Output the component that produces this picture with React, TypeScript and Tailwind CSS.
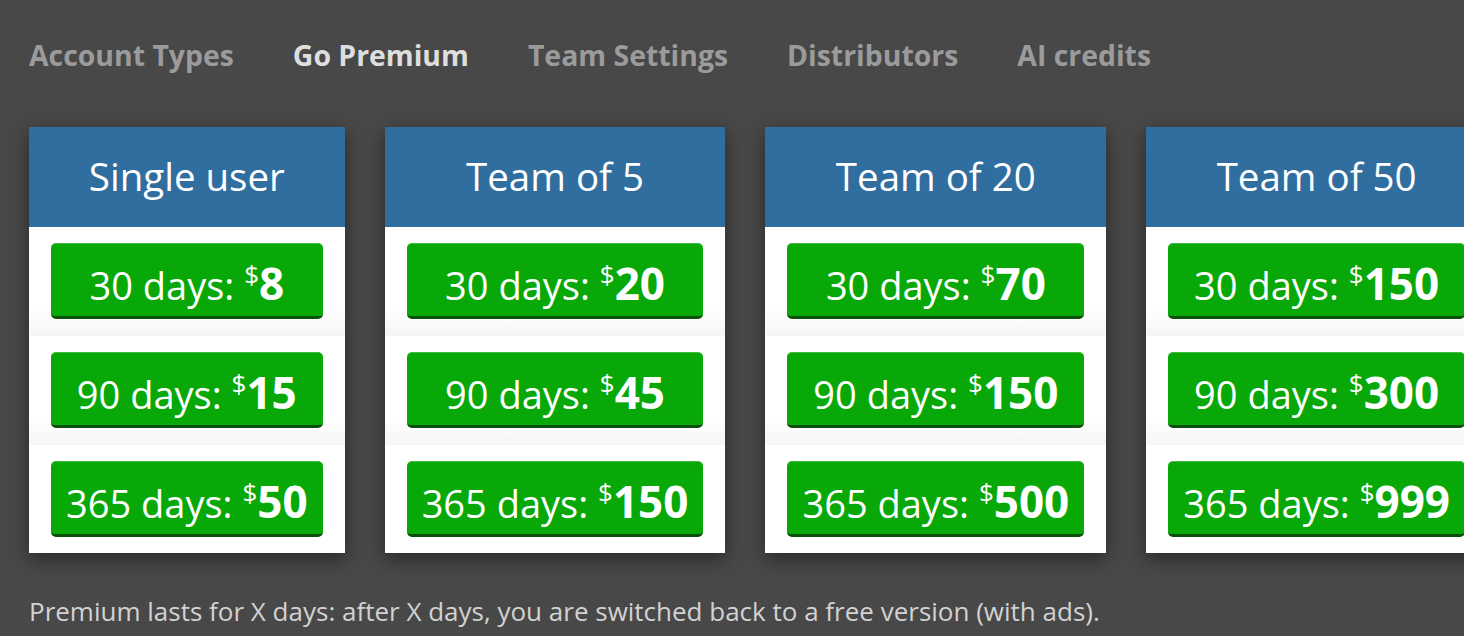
import React from "react";

type Price = { days: string; price: string };
type Plan = { title: string; prices: Price[] };

const plans: Plan[] = [
  { title: "Single user", prices: [{ days: "30", price: "8" }, { days: "90", price: "15" }, { days: "365", price: "50" }] },
  { title: "Team of 5", prices: [{ days: "30", price: "20" }, { days: "90", price: "45" }, { days: "365", price: "150" }] },
  { title: "Team of 20", prices: [{ days: "30", price: "70" }, { days: "90", price: "150" }, { days: "365", price: "500" }] },
  { title: "Team of 50", prices: [{ days: "30", price: "150" }, { days: "90", price: "300" }, { days: "365", price: "999" }] },
];

const tabs = [
  { label: "Account Types", active: false },
  { label: "Go Premium", active: true },
  { label: "Team Settings", active: false },
  { label: "Distributors", active: false },
  { label: "AI credits", active: false },
];

function Card({ plan }: { plan: Plan }) {
  return (
    <div className="shrink-0 w-max bg-white shadow-[0_6px_18px_rgba(0,0,0,0.45)]">
      <div className="h-[100px] bg-[#2f6e9f] flex items-center justify-center text-white text-[38.5px] leading-none pb-[2px]">
        {plan.title}
      </div>
      <div className="flex flex-col">
        {plan.prices.map((p, i) => (
          <div
            key={p.days}
            className={
              i < 2
                ? "px-[22px] pt-4 pb-[17px] bg-linear-to-b from-white from-75% to-[#f5f5f5]"
                : "px-[22px] pt-4 pb-[16px] bg-white"
            }
          >
            <div className="h-[76px] w-full rounded-[5px] bg-[#07a807] border-t border-t-[#3fbb3f] border-b-[3px] border-b-[#0b4f0b] flex items-center justify-center px-[15px] text-white whitespace-nowrap">
              <span className="flex items-baseline pt-[6px]">
                <span className="text-[38px] leading-none">{p.days} days:&nbsp;</span>
                <span className="text-[26px] leading-none relative -top-[16px]">$</span>
                <span className="text-[44px] leading-none font-bold">{p.price}</span>
              </span>
            </div>
          </div>
        ))}
      </div>
    </div>
  );
}

export default function App() {
  return (
    <div
      className="w-[1464px] h-[636px] overflow-hidden bg-[#484848] pl-[29px]"
      style={{ fontFamily: '"Open Sans", "Noto Sans", sans-serif' }}
    >
      <nav className="flex gap-[59px] pt-[36px] text-[28.4px] leading-[38px] font-bold">
        {tabs.map((t) => (
          <span key={t.label} className={t.active ? "text-[#dedede]" : "text-[#9b9b9b]"}>
            {t.label}
          </span>
        ))}
      </nav>
      <div className="flex gap-[40px] mt-[53px]">
        {plans.map((p) => (
          <Card key={p.title} plan={p} />
        ))}
      </div>
      <p className="mt-[40px] text-[26px] leading-[36px] text-[#d2d2d2]">
        Premium lasts for X days: after X days, you are switched back to a free version (with ads).
      </p>
    </div>
  );
}
